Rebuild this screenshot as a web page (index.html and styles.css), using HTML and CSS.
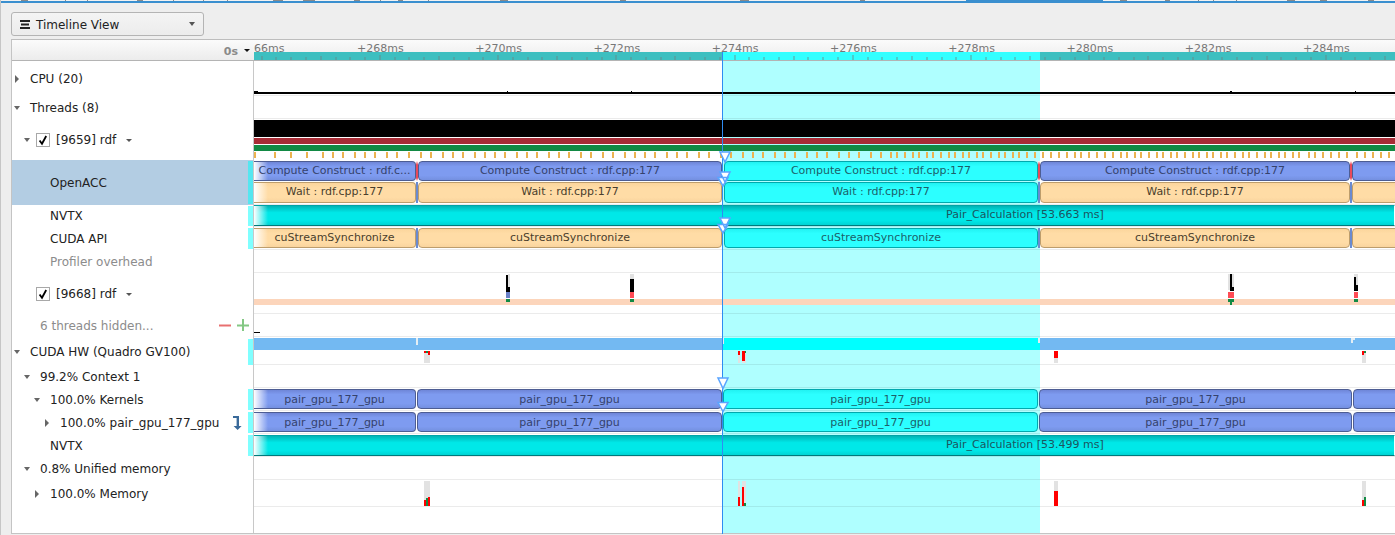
FILE: index.html
```html
<!DOCTYPE html>
<html lang="en">
<head>
<meta charset="utf-8">
<title>Timeline View</title>
<link rel="stylesheet" href="styles.css">
</head>
<body>
<svg class="topstrip" viewBox="0 0 1395 3" width="1395" height="3">
  <rect class="s-white" x="0" y="0" width="1395" height="1"/>
  <rect class="s-blue" x="0" y="1" width="1395" height="2"/>
  <rect class="s-blue" x="966" y="0" width="137" height="1"/>
  <path class="s-gray" d="M21 0h7v1h-7zM65 0h1v1h-1zM87 0h1v1h-1zM137 0h6v1h-6zM173 0h1v1h-1zM203 0h1v1h-1zM227 0h1v1h-1zM273 0h10v1h-10zM303 0h12v1h-12zM354 0h6v1h-6zM380 0h1v1h-1zM398 0h5v1h-5zM428 0h1v1h-1zM500 0h8v1h-8zM620 0h6v1h-6zM740 0h9v1h-9zM860 0h5v1h-5zM1120 0h7v1h-7zM1165 0h5v1h-5zM1198 0h1v1h-1zM1213 0h1v1h-1zM1236 0h1v1h-1zM1287 0h8v1h-8zM1320 0h7v1h-7zM1368 0h6v1h-6z"/>
</svg>

<div class="toolbar">
  <button class="combo" type="button">
    <svg class="combo-icon" viewBox="0 0 10 9" width="10" height="9"><path d="M0 0h10v2H0zM1 3.5h8v2H1zM0 7h10v2H0z"/></svg>
    <span class="combo-text">Timeline View</span>
    <i class="combo-caret"></i>
  </button>
</div>

<main class="panel">
  <div class="selection"></div>

  <div class="row header">
    <div class="label head-label"><span class="zero">0s</span><i class="head-caret"></i></div>
    <div class="track ruler">
      <div class="times">
        <span>66ms</span><span>+268ms</span><span>+270ms</span><span>+272ms</span><span>+274ms</span><span>+276ms</span><span>+278ms</span><span>+280ms</span><span>+282ms</span><span>+284ms</span>
      </div>
      <svg class="band" viewBox="0 0 1141 8" width="1141" height="8">
        <rect class="band-teal" x="0" y="0" width="468" height="8"/>
        <rect class="band-sel" x="468" y="0" width="318" height="8"/>
        <rect class="band-teal" x="786" y="0" width="355" height="8"/>
        <path class="band-tick" d="M22 5v3M37 5v3M52 5v3M82 5v3M96 5v3M111 5v3M141 5v3M155 5v3M170 5v3M200 5v3M215 5v3M229 5v3M259 5v3M274 5v3M288 5v3M318 5v3M333 5v3M348 5v3M377 5v3M392 5v3M407 5v3M436 5v3M451 5v3M466 5v3M495 5v3M510 5v3M525 5v3M554 5v3M569 5v3M584 5v3M614 5v3M628 5v3M643 5v3M673 5v3M688 5v3M702 5v3M732 5v3M747 5v3M761 5v3M791 5v3M806 5v3M821 5v3M850 5v3M865 5v3M880 5v3M909 5v3M924 5v3M939 5v3M968 5v3M983 5v3M998 5v3M1027 5v3M1042 5v3M1057 5v3M1087 5v3M1101 5v3M1116 5v3"/>
        <path class="band-tick" d="M8 4v4M67 4v4M126 3v5M185 4v4M244 3v5M303 4v4M362 3v5M421 4v4M481 3v5M540 4v4M599 3v5M658 4v4M717 3v5M776 4v4M835 3v5M894 4v4M954 3v5M1013 4v4M1072 3v5M1131 4v4"/>
      </svg>
    </div>
  </div>

  <div class="row h35">
    <div class="label lv0"><span class="slot"><i class="arrow-right"></i></span><span>CPU (20)</span></div>
    <div class="track sep">
      <svg class="chart" viewBox="254 61 1141 34" width="1141" height="34">
        <path class="c-black" d="M254 92h1141v2H254zM254 91h4v1h-4zM507 91h1v1h-1zM631 91h1v1h-1zM1230 91h2v1h-2zM1355 91h1v1h-1z"/>
      </svg>
    </div>
  </div>

  <div class="row h23">
    <div class="label lv0"><span class="slot"><i class="arrow-down"></i></span><span>Threads (8)</span></div>
    <div class="track sep"></div>
  </div>

  <div class="row h41">
    <div class="label lv1"><span class="slot"><i class="arrow-down"></i></span>
      <svg class="check" viewBox="0 0 14 14" width="14" height="14"><rect class="check-box" x="0.5" y="0.5" width="13" height="13"/><path class="check-tick" d="M3.6 7.4l2.4 3.4L10.2 3"/></svg>
      <span>[9659] rdf</span><i class="mini-caret"></i></div>
    <div class="track stripes">
      <div class="stripe s-k"></div>
      <div class="stripe s-r"></div>
      <div class="stripe s-g"></div>
      <svg class="ticks" viewBox="0 0 1141 6" width="1141" height="6">
        <path d="M1 0v6M21 0v6M37 0v6M53 0v6M69 0v6M79 0v6M89 0v6M101 0v6M111 0v6M121 0v6M133 0v6M143 0v6M155 0v6M167 0v6M177 0v6M189 0v6M199 0v6M209 0v6M221 0v6M231 0v6M241 0v6M251 0v6M263 0v6M273 0v6M283 0v6M295 0v6M305 0v6M315 0v6M327 0v6M337 0v6M349 0v6M359 0v6M371 0v6M381 0v6M391 0v6M401 0v6M413 0v6M423 0v6M433 0v6M445 0v6M455 0v6M467 0v6M477 0v6M489 0v6M499 0v6M509 0v6M521 0v6M531 0v6M541 0v6M553 0v6M563 0v6M573 0v6M585 0v6M595 0v6M605 0v6M617 0v6M627 0v6M637 0v6M643 0v6M651 0v6M659 0v6M665 0v6M673 0v6M679 0v6M687 0v6M695 0v6M701 0v6M709 0v6M715 0v6M723 0v6M729 0v6M737 0v6M745 0v6M751 0v6M759 0v6M765 0v6M773 0v6M781 0v6M789 0v6M797 0v6M805 0v6M813 0v6M821 0v6M827 0v6M835 0v6M843 0v6M851 0v6M859 0v6M867 0v6M873 0v6M881 0v6M887 0v6M895 0v6M903 0v6M909 0v6M917 0v6M923 0v6M931 0v6M939 0v6M945 0v6M953 0v6M959 0v6M967 0v6M973 0v6M981 0v6M989 0v6M995 0v6M1003 0v6M1011 0v6M1017 0v6M1025 0v6M1031 0v6M1039 0v6M1045 0v6M1055 0v6M1061 0v6M1069 0v6M1077 0v6M1085 0v6M1093 0v6M1103 0v6M1111 0v6M1119 0v6M1127 0v6M1135 0v6"/>
      </svg>
    </div>
  </div>

  <div class="row h45">
    <div class="label lv2 picked"><span class="slot"></span><span>OpenACC</span><i class="mark mark-picked"></i></div>
    <div class="track sep pad1">
      <div class="lane h20 gapped">
        <div class="event blue first up" style="width:162px">Compute Construct : rdf.c...</div>
        <i class="sliver red"></i>
        <div class="event blue up" style="width:304px">Compute Construct : rdf.cpp:177</div>
        <i class="sliver"></i>
        <div class="event cyan up" style="width:314px">Compute Construct : rdf.cpp:177</div>
        <i class="sliver red"></i>
        <div class="event blue up" style="width:310px">Compute Construct : rdf.cpp:177</div>
        <i class="sliver red"></i>
        <div class="event blue" style="width:60px"></div>
      </div>
      <div class="lane h21">
        <div class="event orange first up" style="width:162px">Wait : rdf.cpp:177</div>
        <i class="sliver navy"></i>
        <div class="event orange up" style="width:304px">Wait : rdf.cpp:177</div>
        <i class="sliver"></i>
        <div class="event cyan up" style="width:314px">Wait : rdf.cpp:177</div>
        <i class="sliver navy"></i>
        <div class="event orange up" style="width:310px">Wait : rdf.cpp:177</div>
        <i class="sliver navy"></i>
        <div class="event orange" style="width:60px"></div>
      </div>
    </div>
  </div>

  <div class="row h22">
    <div class="label lv2"><span class="slot"></span><span>NVTX</span><i class="mark"></i></div>
    <div class="track sep">
      <div class="lane h21"><div class="event teal first up">Pair_Calculation [53.663 ms]</div></div>
    </div>
  </div>

  <div class="row h23">
    <div class="label lv2"><span class="slot"></span><span>CUDA API</span><i class="mark"></i></div>
    <div class="track sep pad1">
      <div class="lane h20">
        <div class="event orange first up" style="width:162px">cuStreamSynchronize</div>
        <i class="sliver navy"></i>
        <div class="event orange up" style="width:304px">cuStreamSynchronize</div>
        <i class="sliver"></i>
        <div class="event cyan up" style="width:314px">cuStreamSynchronize</div>
        <i class="sliver navy"></i>
        <div class="event orange up" style="width:310px">cuStreamSynchronize</div>
        <i class="sliver navy"></i>
        <div class="event orange" style="width:60px"></div>
      </div>
    </div>
  </div>

  <div class="row h23">
    <div class="label lv2 muted"><span class="slot"></span><span>Profiler overhead</span></div>
    <div class="track sep"></div>
  </div>

  <div class="row h41">
    <div class="label lv1"><span class="slot"></span>
      <svg class="check" viewBox="0 0 14 14" width="14" height="14"><rect class="check-box" x="0.5" y="0.5" width="13" height="13"/><path class="check-tick" d="M3.6 7.4l2.4 3.4L10.2 3"/></svg>
      <span>[9668] rdf</span><i class="mini-caret"></i></div>
    <div class="track sep">
      <svg class="chart" viewBox="254 273 1141 40" width="1141" height="40">
        <rect class="c-peach" x="254" y="299" width="1141" height="6"/>
        <path class="c-gray" d="M508 274h2v13h-2zM630 274h4v5h-4zM1228 274h2v16h-2zM1232 274h2v13h-2zM1354 274h4v4h-4zM1356 278h2v7h-2z"/>
        <path class="c-black" d="M506 275h2v17h-2zM508 287h2v5h-2zM630 279h4v13h-4zM1230 274h2v17h-2zM1232 287h2v4h-2zM1354 277h2v14h-2zM1356 285h2v6h-2z"/>
        <rect class="c-blue" x="506" y="292" width="4" height="6"/>
        <path class="c-coral" d="M630 292h4v6h-4zM1228 292h6v6h-6zM1354 292h4v6h-4z"/>
        <path class="c-green" d="M506 299h4v3h-4zM630 299h4v3h-4zM1228 299h6v3h-6zM1230 302h2v3h-2zM1354 299h4v3h-4z"/>
      </svg>
    </div>
  </div>

  <div class="row h23">
    <div class="label lv1 muted"><span class="slot"></span><span>6 threads hidden...</span>
      <svg class="tools hide-tools" viewBox="0 0 31 13" width="31" height="13"><path class="minus" d="M0 5.5h12v2H0z"/><path class="plus" d="M18 5.5h12v2H18zM23 0h2v12h-2z"/></svg>
    </div>
    <div class="track sep">
      <svg class="chart" viewBox="254 314 1141 22" width="1141" height="22"><rect class="c-black" x="254" y="332" width="6" height="1"/></svg>
    </div>
  </div>

  <div class="row h28">
    <div class="label lv0 nudge"><span class="slot"><i class="arrow-down"></i></span><span>CUDA HW (Quadro GV100)</span><i class="mark mark-flush"></i></div>
    <div class="track sep">
      <svg class="chart" viewBox="254 337 1141 27" width="1141" height="27">
        <rect class="c-sky" x="254" y="338" width="469" height="12"/>
        <rect class="c-aqua" x="723" y="338" width="317" height="12"/>
        <rect class="c-sky" x="1040" y="338" width="355" height="12"/>
        <path class="c-spur" d="M416 338h2v7h-2zM722 338h2v6h-2zM1038 338h2v5h-2zM1351 338h4v2h-4zM1351 340h2v3h-2z"/>
        <path class="c-gray" d="M424 351h6v12h-6zM738 351h2v12h-2zM742 351h4v12h-4zM1054 351h4v12h-4zM1362 351h4v12h-4z"/>
        <path class="c-red" d="M424 351h2v2h-2zM428 351h2v4h-2zM738 351h2v4h-2zM742 351h3v10h-3zM1054 351h4v7h-4zM1362 351h2v4h-2z"/>
        <path class="c-green" d="M426 351h2v2h-2zM745 351h1v2h-1zM1364 351h2v2h-2z"/>
      </svg>
    </div>
  </div>

  <div class="row h23">
    <div class="label lv1"><span class="slot"><i class="arrow-down"></i></span><span>99.2% Context 1</span></div>
    <div class="track sep"></div>
  </div>

  <div class="row h23">
    <div class="label lv2"><span class="slot"><i class="arrow-down"></i></span><span>100.0% Kernels</span><i class="mark"></i></div>
    <div class="track sep pad1">
      <div class="lane h20 tight">
        <div class="event blue first" style="width:162px">pair_gpu_177_gpu</div>
        <div class="event blue" style="width:305px">pair_gpu_177_gpu</div>
        <div class="event cyan" style="width:315px">pair_gpu_177_gpu</div>
        <div class="event blue" style="width:313px">pair_gpu_177_gpu</div>
        <div class="event blue" style="width:60px"></div>
      </div>
    </div>
  </div>

  <div class="row h23">
    <div class="label lv3"><span class="slot"><i class="arrow-right"></i></span><span>100.0% pair_gpu_177_gpu</span>
      <svg class="tools jump" viewBox="0 0 9 14" width="9" height="14"><path d="M0 0h6v10h2.6L4.6 14 .6 10h3V2H0z"/></svg>
      <i class="mark"></i></div>
    <div class="track sep pad1">
      <div class="lane h20 tight">
        <div class="event blue first" style="width:162px">pair_gpu_177_gpu</div>
        <div class="event blue" style="width:305px">pair_gpu_177_gpu</div>
        <div class="event cyan" style="width:315px">pair_gpu_177_gpu</div>
        <div class="event blue" style="width:313px">pair_gpu_177_gpu</div>
        <div class="event blue" style="width:60px"></div>
      </div>
    </div>
  </div>

  <div class="row h23">
    <div class="label lv2"><span class="slot"></span><span>NVTX</span><i class="mark"></i></div>
    <div class="track sep pad1">
      <div class="lane h21"><div class="event teal first up">Pair_Calculation [53.499 ms]</div></div>
    </div>
  </div>

  <div class="row h23">
    <div class="label lv1"><span class="slot"><i class="arrow-down"></i></span><span>0.8% Unified memory</span></div>
    <div class="track sep"></div>
  </div>

  <div class="row h27">
    <div class="label lv2"><span class="slot"><i class="arrow-right"></i></span><span>100.0% Memory</span></div>
    <div class="track sep">
      <svg class="chart" viewBox="254 480 1141 26" width="1141" height="26">
        <path class="c-gray" d="M424 481h6v25h-6zM738 481h2v25h-2zM742 481h4v25h-4zM1054 481h4v25h-4zM1362 481h4v25h-4z"/>
        <path class="c-red" d="M424 500h2v6h-2zM428 497h2v9h-2zM738 497h2v9h-2zM742 487h2v19h-2zM1054 491h4v15h-4zM1362 500h2v6h-2z"/>
        <path class="c-green" d="M426 498h2v8h-2zM744 503h2v3h-2zM1364 497h2v9h-2z"/>
      </svg>
    </div>
  </div>

  <div class="row rest">
    <div class="label"></div>
    <div class="track"></div>
  </div>

  <svg class="overlay" viewBox="12 40 1383 494" width="1383" height="494">
    <rect class="cursor" x="722" y="52" width="1" height="482"/>
    <path class="tri" d="M720 152h10l-5 10zM720 172h10l-5 10zM718 177.5h10l-5 8.5zM720 218h10l-5 10zM718 224.5h10l-5 8.5zM718 378h10l-5 10.5zM718 402.5h10l-5 9z"/>
  </svg>
</main>
</body>
</html>
```

FILE: styles.css
```css
* { box-sizing: border-box; }

html, body { margin: 0; height: 535px; overflow: hidden; }

body {
  width: 1395px;
  background: #eeeeee;
  border-left: 1px solid #c6c6c6;
  font: 12px "DejaVu Sans", sans-serif;
  color: #222222;
}

.topstrip { display: block; margin-left: -1px; }
.s-white { fill: #f2f2f2; }
.s-blue { fill: #3a8fcf; }
.s-gray { fill: #8a8a8a; }

.toolbar { height: 36px; padding: 9px 0 0 10px; }

.combo {
  display: flex;
  align-items: center;
  width: 193px;
  height: 24px;
  padding: 1px 8px 0 8px;
  border: 1px solid #b4b4b4;
  border-radius: 3px;
  background: linear-gradient(#f4f4f4, #ececec);
  font: 12px "DejaVu Sans", sans-serif;
  color: #222222;
}
.combo-icon { fill: #222222; margin-right: 6px; }
.combo-caret {
  margin-left: auto;
  margin-top: -2px;
  border-left: 3.5px solid transparent;
  border-right: 3.5px solid transparent;
  border-top: 4px solid #555555;
}

.panel {
  position: relative;
  display: flex;
  flex-direction: column;
  width: 1384px;
  height: 495px;
  margin-left: 10px;
  background: #ffffff;
  border-left: 1px solid #c4c4c4;
  border-top: 1px solid #bdbdbd;
  border-bottom: 1px solid #c4c4c4;
}

.selection {
  position: absolute;
  left: 710px;
  top: 21px;
  bottom: 0;
  width: 318px;
  background: #afffff;
}

.overlay { position: absolute; left: 0; top: 0; z-index: 2; pointer-events: none; }
.cursor { fill: #2f8cf2; }
.tri { fill: #ffffff; stroke: #5aa5ff; stroke-width: 1.5; }

.row { position: relative; z-index: 1; display: flex; flex: none; }
.h22 { height: 22px; }
.h23 { height: 23px; }
.h27 { height: 27px; }
.h28 { height: 28px; }
.h35 { height: 35px; }
.h41 { height: 41px; }
.h45 { height: 45px; }
.rest { flex: 1; }

.label {
  flex: none;
  display: flex;
  align-items: center;
  width: 242px;
  border-right: 1px solid #c8c8c8;
  white-space: nowrap;
}
.lv1 { padding-left: 10px; }
.lv2 { padding-left: 20px; }
.lv3 { padding-left: 30px; }
.muted { color: #8c8c8c; }
.picked { background: #b3cde3; }
.nudge { padding-top: 1px; }

.slot {
  flex: none;
  display: flex;
  justify-content: center;
  width: 10px;
  margin-right: 8px;
}
.arrow-right {
  border-top: 4px solid transparent;
  border-bottom: 4px solid transparent;
  border-left: 4px solid #666666;
}
.arrow-down {
  border-left: 3.5px solid transparent;
  border-right: 3.5px solid transparent;
  border-top: 4px solid #666666;
}
.check { flex: none; margin: 0 6px 0 -4px; }
.check-box { fill: #ffffff; stroke: #a8a8a8; }
.check-tick { fill: none; stroke: #000000; stroke-width: 1.8; }
.mini-caret {
  margin-left: 10px;
  margin-top: 2px;
  border-left: 3px solid transparent;
  border-right: 3px solid transparent;
  border-top: 3px solid #555555;
}

.mark {
  flex: none;
  align-self: stretch;
  width: 5px;
  margin: 1px 0 1px auto;
  background: #80ffff;
}
.mark-picked { background: #55e6f0; }
.mark-flush { margin-bottom: 0; }
.tools { flex: none; margin-left: auto; }
.tools + .mark { margin-left: 0; }
.hide-tools { margin-right: 3px; }
.minus { fill: #e87070; }
.plus { fill: #84c884; }
.jump { fill: #3a6a9a; margin-right: 6px; }

.track {
  flex: none;
  width: 1141px;
  overflow: hidden;
}
.sep { border-bottom: 1px solid rgba(0, 0, 0, 0.08); }
.pad1 { padding-top: 1px; }

.chart, .ticks { display: block; }
.c-black { fill: #000000; }
.c-gray { fill: #e2e2e2; }
.c-red { fill: #ff0000; }
.c-coral { fill: #ff4c55; }
.c-green { fill: #128a44; }
.c-blue { fill: #6a80c8; }
.c-peach { fill: #fcd5bb; }
.c-sky { fill: #73b9f2; }
.c-aqua { fill: #00ffff; }
.c-spur { fill: #e4eef4; }

.header { height: 21px; border-bottom: 1px solid #b4b4b4; background: linear-gradient(#fbfbfb, #ececec); }
.head-label { justify-content: flex-end; padding-right: 4px; border-right: 0; }
.zero { font-size: 11px; font-weight: bold; color: #8a8a8a; margin-top: 3px; }
.head-caret {
  margin-left: 6px;
  margin-top: 1px;
  border-left: 3px solid transparent;
  border-right: 3px solid transparent;
  border-top: 3px solid #111111;
}

.ruler { position: relative; }
.times {
  position: relative;
  z-index: 1;
  display: flex;
  height: 12px;
  font-size: 11px;
  line-height: 18px;
  color: #777777;
}
.times span { flex: 0 0 118.25px; }
.times span:first-child { flex-basis: 103px; }
.band { display: block; }
.band-teal { fill: #3dbfc0; }
.band-sel { fill: #33ffff; }
.band-tick { fill: none; stroke: rgba(110, 130, 130, 0.4); stroke-width: 2; }

.stripes { display: flex; flex-direction: column; gap: 1px; padding-top: 1px; }
.stripe { flex: none; height: 6px; }
.s-k { height: 17px; background: #000000; }
.s-r { background: #a82c36; }
.s-g { background: #128a44; }
.ticks path { fill: none; stroke: #ecb34f; stroke-width: 2; }

.lane { display: flex; }
.tight { gap: 1px; }
.gapped { margin-bottom: 1px; }
.h20 { height: 20px; }
.h21 { height: 21px; }

.event {
  flex: none;
  display: flex;
  align-items: center;
  justify-content: center;
  height: 100%;
  border: 1px solid;
  border-radius: 4px;
  background: var(--fill);
  font-size: 11px;
  white-space: nowrap;
  overflow: hidden;
}
.up { padding-bottom: 2px; }
.first {
  border-left: 0;
  border-radius: 0 4px 4px 0;
  background: linear-gradient(90deg, #ffffff, rgba(255, 255, 255, 0) 14px), var(--fill);
}
.blue {
  --fill: linear-gradient(#6f86d8, #7e9bf0 25%, #7e9bf0 75%, #7490e0);
  border-color: #4d5d93;
  color: #35426c;
}
.orange {
  --fill: linear-gradient(#fbd59c, #ffdca6 25%, #ffdca6 75%, #f9d49e);
  border-color: #bd9d6c;
  color: #4a3e2c;
}
.cyan {
  --fill: linear-gradient(#22f2f2, #2cffff 25%, #2cffff);
  border-color: #00a9ae;
  color: #1c5f6a;
}
.teal {
  --fill: linear-gradient(#00b4b6, #00e8e8 35%, #00e8e8 75%, #00d4d4);
  width: 100%;
  justify-content: flex-start;
  padding-left: 692px;
  border-color: #00a4a6 transparent #007a7c;
  border-radius: 0;
  color: #1c5560;
}

.sliver { flex: none; width: 2px; background: transparent; }
.sliver.red { background: linear-gradient(#ffffff, #e84a5a 18%, #e84a5a 85%, #ffffff); }
.sliver.navy { background: #6a8ad0; }
```
